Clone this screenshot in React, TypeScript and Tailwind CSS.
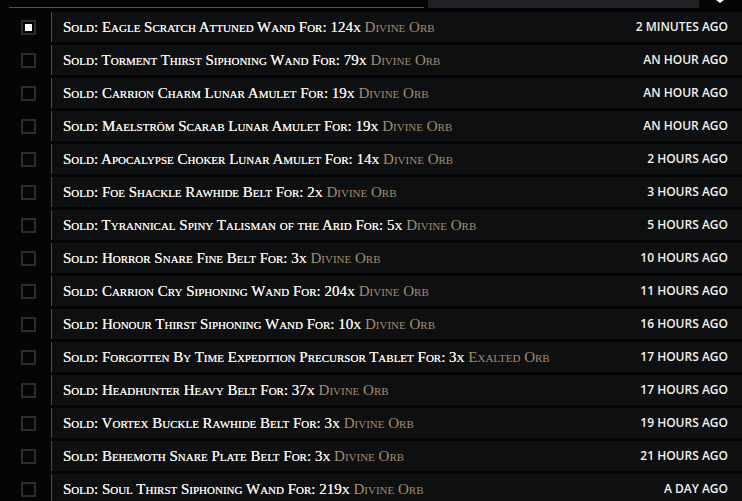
import React from "react";

const rows: [string, string, string, string][] = [
  ["Eagle Scratch Attuned Wand", "124x", "Divine Orb", "2 minutes ago"],
  ["Torment Thirst Siphoning Wand", "79x", "Divine Orb", "an hour ago"],
  ["Carrion Charm Lunar Amulet", "19x", "Divine Orb", "an hour ago"],
  ["Maelström Scarab Lunar Amulet", "19x", "Divine Orb", "an hour ago"],
  ["Apocalypse Choker Lunar Amulet", "14x", "Divine Orb", "2 hours ago"],
  ["Foe Shackle Rawhide Belt", "2x", "Divine Orb", "3 hours ago"],
  ["Tyrannical Spiny Talisman of the Arid", "5x", "Divine Orb", "5 hours ago"],
  ["Horror Snare Fine Belt", "3x", "Divine Orb", "10 hours ago"],
  ["Carrion Cry Siphoning Wand", "204x", "Divine Orb", "11 hours ago"],
  ["Honour Thirst Siphoning Wand", "10x", "Divine Orb", "16 hours ago"],
  ["Forgotten By Time Expedition Precursor Tablet", "3x", "Exalted Orb", "17 hours ago"],
  ["Headhunter Heavy Belt", "37x", "Divine Orb", "17 hours ago"],
  ["Vortex Buckle Rawhide Belt", "3x", "Divine Orb", "19 hours ago"],
  ["Behemoth Snare Plate Belt", "3x", "Divine Orb", "21 hours ago"],
  ["Soul Thirst Siphoning Wand", "219x", "Divine Orb", "a day ago"],
];

export default function App() {
  return (
    <div className="w-[742px] h-[501px] bg-[#050505] overflow-hidden relative">
      <div className="flex items-start h-[12px]">
        <div className="ml-[9px] mt-[7px] w-[415px] h-px bg-[#4a525c]" />
        <div className="ml-[4px] w-[271px] h-[8px] bg-[#1f2124]" />
        <div className="ml-[17px] w-0 h-0 border-l-[4px] border-r-[4px] border-t-[3px] border-l-transparent border-r-transparent border-t-white" />
      </div>
      <div className="flex flex-col gap-[3px]">
        {rows.map((r, i) => (
          <div key={i} className="flex items-center h-[30px]">
            <div className="w-[51px] pl-[21px]">
              <div className="w-[15px] h-[15px] border-2 border-[#2a2c2f] flex items-center justify-center">
                {i === 0 && <div className="w-[7px] h-[7px] bg-white" />}
              </div>
            </div>
            <div className="flex-1 h-full bg-[#0e0f11] border-l border-[#5c4a33] flex items-center justify-between pl-[11px] pr-[14px]">
              <span
                className="text-[15px] text-[#f6f3ec]"
                style={{ fontFamily: '"Liberation Serif", serif', fontVariant: "small-caps", fontWeight: 400, textShadow: "0 0 0.4px #f6f3ec" }}
              >
                Sold: {r[0]} For: {r[1]} <span className="text-[#a38d6d]" style={{ textShadow: "none" }}>{r[2]}</span>
              </span>
              <span
                className="text-[12px] uppercase text-[#f4f1ea] font-semibold"
                style={{ fontFamily: '"Open Sans", sans-serif' }}
              >
                {r[3]}
              </span>
            </div>
          </div>
        ))}
      </div>
    </div>
  );
}
